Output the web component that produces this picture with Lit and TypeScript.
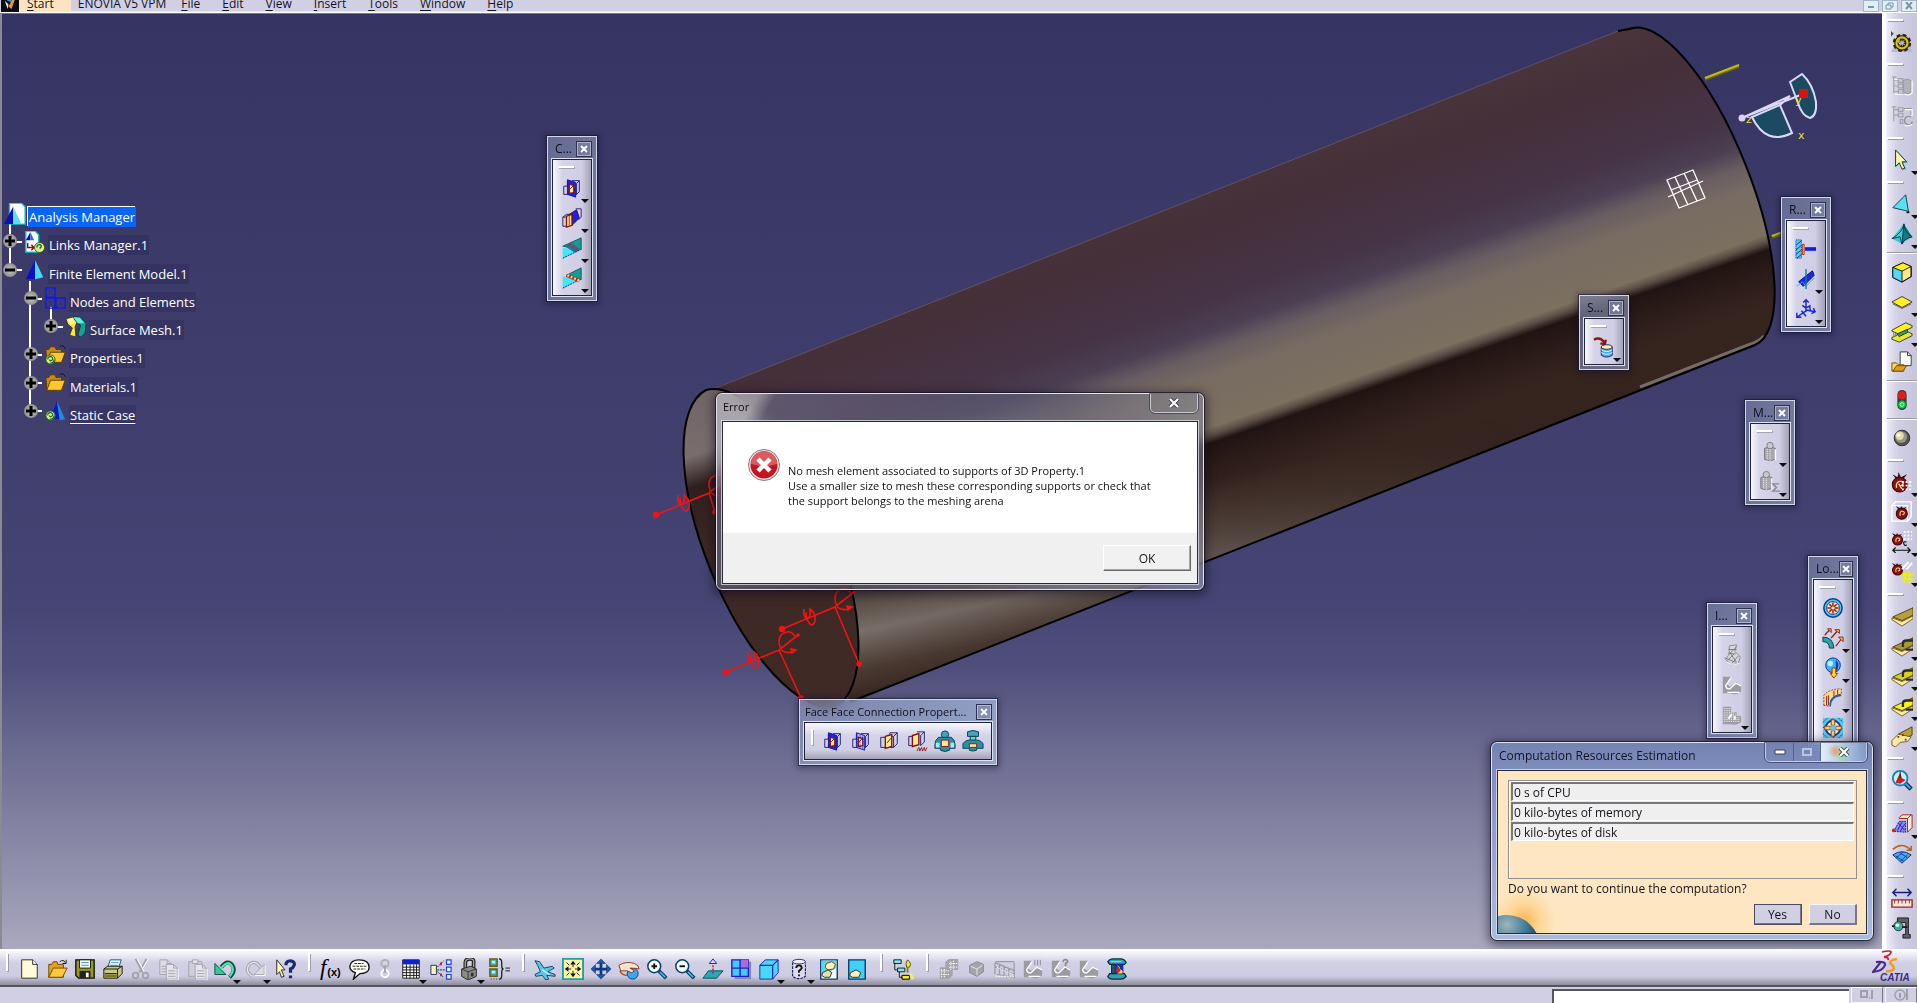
import { LitElement, html, svg, css, nothing } from "lit";
import { customElement, property } from "lit/decorators.js";

type Item = { icon: string; label: string; drop?: boolean; narrow?: boolean };
const it = (icon: string, label: string, drop = false, narrow = false): Item => ({ icon, label, drop, narrow });

const faceFrame = (fill: string) => svg`
  <path d="M3 10h4V5h4M3 10v9h7M7 19l3-4" fill="none" stroke="#1a1a70"/>
  <path d="M12 4h8v12l-3 3h-4M20 4l-3 3v12" fill="none" stroke="#1a1a70"/>
  <path d="M7 3l9 3v16l-9-3z" fill="${fill}" stroke="#1010c0"/>
  <path d="M9 8l5 1v8l-5 1z" fill="#ffe98a" stroke="#8a1010" stroke-width="1.5"/>
  <path d="M10 13l4-4" stroke="#222"/>`;
const gearBody = svg`<circle cx="12" cy="13" r="6" fill="none" stroke="#2a2200" stroke-width="8" stroke-dasharray="2.700 2"/>
  <circle cx="12" cy="13" r="6" fill="none" stroke="#2a2200" stroke-width="5"/>
  <circle cx="12" cy="13" r="6" fill="none" stroke="#d8c018" stroke-width="2.500"/>
  <path d="M9 9q-2 3 1 6" fill="none" stroke="#fff36a"/>`;
const tomato = svg`<path d="M3 3l5 3 1-5 2 5 6-3-4 5H7z" fill="#2a1414"/>
  <circle cx="10" cy="13" r="7" fill="#8c1010" stroke="#3a0606"/>
  <path d="M7 16q-1-7 5-6q3 2-1 4M9 12l3 5" fill="none" stroke="#ffd9a0" stroke-width="1.3"/>`;
const tomatoSmall = svg`<path d="M1 2l4 2 1-2 1 2 4-1-3 3H4z" fill="#2a1414"/>
  <circle cx="6.500" cy="9" r="5" fill="#8c1010" stroke="#3a0606"/>
  <path d="M5 11q-1-5 3-4q2 2-1 3" fill="none" stroke="#ffd9a0"/>`;
const greyBlob = svg`<path d="M2 3h9l-5 8 4 3 6-5 6 3v7q-6 5-12 2H2z" fill="#9c9ba2"/>
  <path d="M11 4l-6 9q1 4 5 3l6-6 6 3M7 20h13" fill="none" stroke="#fff" stroke-width="1.500"/>`;
const recycle = svg`<circle cx="6" cy="17" r="5" fill="#d8f08a" stroke="#16602a"/>
  <path d="M3 17q0-4 4-3q3 2 0 4q-2 1-2-1M10 17q0 4-5 4" fill="none" stroke="#16602a" stroke-width="1.3"/>`;
const folder = svg`<path d="M1 6h3l2-3h5l1 3h6v14H2z" fill="#c88a10" stroke="#5a3c00"/>
  <path d="M2 20L6 9h16l-4 11z" fill="#ffc72c" stroke="#5a3c00"/><path d="M16 3q4-3 6 2" fill="none" stroke="#111"/>`;
const layer = (top: string) => svg`<path d="M2 13L24 3v8L12 17z" fill="${top}" stroke="#4a3c08"/>
  <path d="M1 14l11 4 12-6v3l-12 8-11-7z" fill="#ffe9a0" stroke="#4a3c08" stroke-width=".8"/>`;
const clampArm = svg`<path d="M13 13V9q0-3 4-3h7M16 16h8" fill="none" stroke="#2e2e24" stroke-width="2.500"/>`;
const lens = svg`<path d="M14 14l8 8" stroke="#0a3a66" stroke-width="4"/><path d="M15 15l6 6" stroke="#58c8f0" stroke-width="1.500"/>
  <circle cx="9" cy="9" r="7" fill="#f2fdff" stroke="#0a3a66" stroke-width="1.600"/>`;
const barrel = svg`<path d="M6 8q6-3 12 0v12q-6 3-12 0z" fill="#a9a8ae" stroke="#77767c"/>
  <circle cx="12" cy="5" r="3.500" fill="#c9c8ce" stroke="#77767c"/><path d="M9 9v12M12 9v13" stroke="#fff" stroke-dasharray="1 1"/>
  <path d="M18 9v12" stroke="#fff" stroke-width="1.500"/>`;
const page = (x: number, y: number, c: string, s: string) =>
  svg`<path d="M${x} ${y}h8l4 4v12h-12z" fill="${c}" stroke="${s}"/><path d="M${x + 8} ${y}v4h4M${x + 2} ${y + 7}h8M${x + 2} ${y + 10}h8M${x + 2} ${y + 13}h8" fill="none" stroke="${s}"/>`;

const ICONS: Record<string, unknown> = {
  faceBlue: faceFrame("#2020e0"),
  faceMesh: svg`${faceFrame("#b8b8f0")}<path d="M8 4v15M11 5v15M14 6v15" stroke="#1010c0" stroke-dasharray="1 1"/>`,
  facePlain: svg`<path d="M3 8h5l3-3M3 8v11h6" fill="none" stroke="#1a1a70"/><path d="M13 3h8v12l-4 4h-4zM21 3l-4 4v12M13 7h4" fill="none" stroke="#1a1a70"/><path d="M8 7l7-2v13l-7 2z" fill="#ffe98a" stroke="#8a1010" stroke-width="1.500"/><path d="M10 14l4-5" stroke="#222"/>`,
  faceSpring: svg`<path d="M3 7h5l3-3M3 7v10h6" fill="none" stroke="#1a1a70"/><path d="M12 2h8v11l-4 4M20 2l-4 4v11" fill="none" stroke="#1a1a70"/><path d="M7 6l7-2v12l-7 2z" fill="#ffe98a" stroke="#8a1010" stroke-width="1.500"/><path d="M12 23l2-4 1 4 2-4 1 4 2-4 1 4 2-4" fill="none" stroke="#a01010"/>`,
  boltUp: svg`<circle cx="12" cy="5" r="4" fill="#3aa8b8" stroke="#0a3a50"/><path d="M5 8q-4 3-4 8v4h6v2q5 3 10 0v-2h6v-4q0-5-4-8z" fill="#2a90a8" stroke="#0a3a50"/><path d="M2 14h4v5H2zM18 14h4v5h-4z" fill="#a8e8f0"/><path d="M8 11h8v7H8z" fill="#ffe98a" stroke="#8a1010"/>`,
  boltDown: svg`<path d="M6 2q6-3 12 0v5H6z" fill="#3aa8b8" stroke="#0a3a50"/><path d="M9 7h6v5H9z" fill="#70d0d8" stroke="#0a3a50"/><path d="M1 15q3-5 11-4 8-1 11 4v5h-7v2q-4 2-8 0v-2H1z" fill="#2a90a8" stroke="#0a3a50"/><path d="M8 15h8v4H8z" fill="#ffe98a" stroke="#8a1010"/>`,
  weld: svg`<path d="M2 11h4v10H2zM2 11l4-3h5" fill="none" stroke="#1a1a70"/><path d="M16 2h6v9l-3 3" fill="#f0c8e8" stroke="#1a1a70"/><path d="M9 8l8-5 3 9-8 8z" fill="#2020e0" stroke="#101090"/><path d="M6 10l6-2v12l-6 2z" fill="#ffe98a" stroke="#8a1010" stroke-width="1.500"/><path d="M9 10v11" stroke="#c02020"/>`,
  seamA: svg`<path d="M2 10L22 1v13z" fill="#189a90" stroke="#0a5a5a"/><path d="M2 12l19 2L2 24z" fill="#40e8f8"/><path d="M4 10l8-4 9 8-6 3z" fill="#207890"/><path d="M9 8l9 6" stroke="#c02050" stroke-width="3" stroke-dasharray="2 2"/><path d="M2 23l19-9" stroke="#1a1a80" stroke-dasharray="2 1"/>`,
  seamB: svg`<path d="M6 9L22 1v13z" fill="#189a90" stroke="#0a5a5a"/><path d="M2 10l15 5-15 9z" fill="#40e8f8"/><path d="M2 23l18-9" stroke="#1a1a80" stroke-dasharray="2 1"/><path d="M6 9l14 6" stroke="#b02030" stroke-width="3.500"/><path d="M7 9l13 6" stroke="#ffe96a" stroke-width="2.500" stroke-dasharray="2 2"/>`,
  clampWall: svg`<path d="M1 2h6v20H1z" fill="#58c8f0" stroke="#102a90" stroke-dasharray="1 1"/><path d="M1 8l6-5M1 13l6-5M1 18l6-5M2 22l5-4" stroke="#10306a"/><path d="M8 7h2v11H8z" fill="#ffd040" stroke="#b02010"/><path d="M11 12h12" stroke="#1020e0" stroke-width="4"/>`,
  slider: svg`<path d="M4 15L19 3l2 5-12 12z" fill="#1828e8" stroke="#0a0a90"/><path d="M2 20l6-5 4 5 9-9" fill="none" stroke="#38a8d8"/><path d="M12 1v22" stroke="#1a7a9a" stroke-width="1.500"/>`,
  triad: svg`<path d="M12 15V2M9 5l3-3 3 3M12 13l10 2M20 11l2 4-4 2M12 14L2 21M2 16v5h5M8 8l4 3 5-3M16 9l1 6M7 14l5 6" fill="none" stroke="#1828d8" stroke-width="1.600"/>`,
  dbArrow: svg`<path d="M1 4q7-4 12 4M8 8l5 1 1-5" fill="none" stroke="#8a1818" stroke-width="2.500"/><path d="M9 12q6-3 12 0v9q-6 4-12 0z" fill="#4aa8f0" stroke="#102a70"/><ellipse cx="15" cy="12" rx="6" ry="2.500" fill="#fff0a0" stroke="#102a70"/><path d="M9 15q6 4 12 0M9 18q6 4 12 0" fill="none" stroke="#e8f8ff"/>`,
  barrel,
  barrelSum: svg`<g transform="translate(-4 -1)">${barrel}</g><path d="M22 14h-7l4 4-4 4h8" fill="none" stroke="#88878e" stroke-width="1.500"/>`,
  greyRings: svg`<path d="M9 2l8-1-2 7 6 6-2 7-7 2-7-6 4-6z" fill="#d8d7de" stroke="#8a898f"/><path d="M8 6l9 0M9 11l8-8M8 10l8 1M4 15l12 5M10 10l7 10M12 21l7-8M7 18l7-7" fill="none" stroke="#77767c"/><path d="M7 20l6 3 7-2" fill="none" stroke="#fff"/>`,
  greyBlob,
  greyBlobHatch: svg`<path d="M2 3h9v6h6v4h5v7q-6 4-10 2H2z" fill="#9c9ba2"/><path d="M3 5h7M3 7h7M3 9h12M3 11h14M3 13h14M3 15h18M3 17h18M3 19h18" stroke="#fff" stroke-dasharray="1 1"/><path d="M8 16l4-5M15 17v-4" stroke="#fff" stroke-width="2"/>`,
  greyBlobWave: svg`${greyBlob}<path d="M14 2v6M17 2v6M20 2v6" stroke="#88878e"/>`,
  greyBlobAsk: svg`${greyBlob}<path d="M14 4q1-3 4-2 3 2-1 4v3M17 11v2" fill="none" stroke="#88878e" stroke-width="1.800"/>`,
  pressure: svg`<circle cx="12" cy="12" r="10" fill="#48c8f0" stroke="#0a3a90" stroke-width="1.600"/><circle cx="12" cy="12" r="7" fill="#ffe8b0" stroke="#0a3a90"/><path d="M12 6v4M12 14v4M6 12h4M14 12h4M8 8l3 3M13 13l3 3M16 8l-3 3M11 13l-3 3" stroke="#a01010" stroke-width="1.600"/>`,
  force: svg`<path d="M1 11q11 0 12 12H8Q8 16 1 16z" fill="#28a8a0" stroke="#0a3a50"/><path d="M3 9l6-7M10 12l8-9M15 21l7-9" stroke="#8a1818" stroke-width="1.300"/><path d="M6 2h4v4zM14 3h5v4zM18 11h5v5z" fill="#ffd040" stroke="#8a1818"/>`,
  gravity: svg`<circle cx="12" cy="9" r="8" fill="#38b8f0" stroke="#0a2a90"/><circle cx="9" cy="7" r="3" fill="#b8f0ff"/><path d="M15 3q6 6 0 13z" fill="#1838c0"/><path d="M11 12h4v6h2l-4 5-4-5h2z" fill="#ffe020" stroke="#b02010"/>`,
  dispForce: svg`<path d="M2 20V9q6-7 19-7v6Q8 10 9 21z" fill="#ffd890" stroke="#b02010" stroke-dasharray="2 1.500"/><path d="M5 20V10M9 18q0-8 11-10M7 20V9M13 4v6M17 3v5" fill="none" stroke="#8a1818"/><path d="M9 21q-1-10 12-12" fill="none" stroke="#0a70a0" stroke-width="1.500"/>`,
  bearing: svg`<path d="M1 1h22v22H1z" fill="#58c8f0"/><path d="M1 6l5-5M1 12L12 1M12 23l11-11M18 23l5-5M1 18l5 5M18 1l5 5" stroke="#0a3a90" stroke-dasharray="2 1"/><circle cx="12" cy="12" r="8" fill="#f4f0ff" stroke="#0a3a90" stroke-width="2"/><path d="M10 3h4v6h-4zM10 15h4v6h-4zM3 10h6v4H3zM15 10h6v4h-6z" fill="#ffd860" stroke="#8a3010"/><circle cx="12" cy="12" r="3" fill="#58c8f0"/>`,

  gear: svg`<path d="M12 1l12 22H0z" fill="#bcb9cf"/>${gearBody}<path d="M0 0l3 3-3 3z" fill="#4a5a10"/>`,
  dbTree: svg`<path d="M3 2v18M3 6h6M3 12h6M3 18h6M1 2h5M8 4h5v4H8zM8 10h5v4H8zM8 16h5v4H8z" fill="none" stroke="#a3a2aa" stroke-width="1.300"/><path d="M13 6q5-3 9 0v13q-4 3-8 0z" fill="#b2b1b9" stroke="#96959c"/><path d="M23 6v14q-4 3-8 1M4 5h3M4 21h9" fill="none" stroke="#fff" stroke-width="1.300"/>`,
  dbTree2: svg`<path d="M3 2v16M3 5h6M3 11h6M1 2h5M8 3h5v4H8zM8 9h5v4H8zM10 16h3v4h-3z" fill="none" stroke="#a3a2aa" stroke-width="1.300"/><path d="M14 4h8v7M22 13q-6-2-7 3t5 6q3-1 3-4" fill="none" stroke="#96959c" stroke-width="1.600"/><path d="M15 5h8v7M15 22q4 2 8-1" fill="none" stroke="#fff" stroke-width="1.300"/>`,
  cursor: svg`<path d="M5 2l13 13h-6l4 7-4 1-3-7-4 4z" fill="#28d8e8" transform="translate(1 0)"/><path d="M5 1l12 13h-5l3 7-3 1-3-7-4 4z" fill="#fff8b0" stroke="#222"/>`,
  tri: svg`<path d="M2 16L16 2l3 18z" fill="#58e0f0" stroke="#0a3a50"/><path d="M17 20h3v2h-3z" fill="#111"/>`,
  tetra: svg`<path d="M1 17L14 1l9 14-11 8z" fill="#38c8d0"/><path d="M14 1l9 14-10 1z" fill="#107a80"/><path d="M14 1q-1 9-13 16l9-2 2 8q2-6 11-8Q14 11 14 1z" fill="#48d0d8" stroke="#0a3a50"/><path d="M14 1q1 10 9 14-9 2-11 8z" fill="#147a80" stroke="#0a3a50"/>`,
  cube: svg`<path d="M2 7l11-5 9 4v11l-10 6-10-5z" fill="#ffe98a" stroke="#111"/><path d="M2 7l11-5 9 4-10 5z" fill="#fff020"/><path d="M2 7l10 4v12L2 18z" fill="#58d8f8"/><path d="M2 7l10 4 10-5M12 11v12M2 7l11-5 9 4v11l-10 6-10-5z" fill="none" stroke="#111"/>`,
  plate: svg`<path d="M1 12l11-6 11 6-11 6z" fill="#fff020" stroke="#333"/><path d="M2 14l10 5 10-5" fill="none" stroke="#555"/>`,
  beam: svg`<path d="M1 10L16 2l7 3v2L8 14l-7-3z" fill="#fff020" stroke="#333"/><path d="M7 14l11-5v6L7 20z" fill="#30a050" stroke="#333"/><path d="M1 18l6-3 2 2 10-5 4 2v2L9 23l-8-3z" fill="#e8e830" stroke="#333"/><path d="M3 12v5M5 13v4" stroke="#18a0a0"/>`,
  docFolder: svg`<path d="M10 1h8l4 4v11H10z" fill="#fff" stroke="#333"/><path d="M18 1v4h4" fill="none" stroke="#333"/><path d="M1 13h5l2 2h6v7H1z" fill="#ffd860" stroke="#6a4a00"/><path d="M2 22l4-6h11l-4 6z" fill="#e09a20" stroke="#6a4a00"/>`,
  light: svg`<rect x="7" y="1" width="10" height="22" rx="5" fill="#3a3a3a"/><circle cx="12" cy="7" r="4.500" fill="#e81818"/><circle cx="12" cy="17" r="4.500" fill="#18c850" stroke="#0a7a20"/><circle cx="12" cy="17" r="2" fill="none" stroke="#b8ffb8"/>`,
  sphere: svg`<circle cx="12" cy="12" r="8.500" fill="#55544c" stroke="#2e2e2e"/><circle cx="11" cy="11" r="6.500" fill="#96958a"/><circle cx="9.500" cy="9.500" r="4.500" fill="#e0dca8"/><circle cx="8.500" cy="9" r="2" fill="#fffbe0"/>`,
  tomDots: svg`<g transform="translate(-2 0) scale(1.150)">${tomato}</g><path d="M12 12h12M12 16h12M12 20h12" stroke="#fff" stroke-width="2" stroke-dasharray="2 2"/>`,
  tomBox: svg`<path d="M1 5h17v17H1z" fill="none" stroke="#fff" stroke-width="1.500"/><path d="M1 5l4-4h17v16l-4 5" fill="none" stroke="#fff" stroke-width="1.500"/><g transform="translate(4 3) scale(1.200)">${tomatoSmall}</g>`,
  tomSize: svg`<g transform="scale(1.100)">${tomatoSmall}</g><path d="M14 1h9M14 5h9M14 9h9" stroke="#fff" stroke-width="2" stroke-dasharray="2 2"/><path d="M2 21h19M5 18l-3 3 3 3M18 18l3 3-3 3M17 12q-4-1-3 2t3 1" fill="none" stroke="#111" stroke-width="1.300"/>`,
  tomHash: svg`<g transform="scale(1.100)">${tomatoSmall}</g><path d="M12 9l7-8M17 9l6-7" stroke="#fff" stroke-width="2"/><path d="M15 12v12M20 12v12M12 15h12M12 20h12" stroke="#f0f000" stroke-width="2.200"/>`,
  layers: svg`${layer("#b8a038")}`,
  layers1: svg`${layer("#a89838")}${clampArm}`,
  layers2: svg`${layer("#d8d020")}${clampArm}`,
  layers3: svg`${layer("#f8f020")}${clampArm}`,
  layers4: svg`<path d="M8 10L23 2v9l-9 4z" fill="#b8a038" stroke="#4a3c08"/><path d="M1 17l7-7 14 3-4 5-8 1-5 5-4-2z" fill="#ffe9a0" stroke="#4a3c08" stroke-width=".8"/><path d="M7 13h2M12 11h2M15 16h2" stroke="#b02010" stroke-width="2"/>`,
  inspect: svg`<path d="M14 14l8 8" stroke="#0a3a66" stroke-width="5"/><path d="M15 15l6 6" stroke="#38a8e8" stroke-width="2"/><circle cx="10" cy="10" r="8" fill="#b8f8ff" stroke="#1880b0" stroke-width="2"/><path d="M10 4l2 6 4 2-6 4-5-1 2-5z" fill="#d81818"/><path d="M10 10V3" stroke="#2a1010"/>`,
  probe: svg`<path d="M9 5l3-3h11v14l-5 5V6H9z" fill="#ffe8d0" stroke="#a01818"/><path d="M18 6l4-4" stroke="#a01818"/><path d="M3 20L9 9h7v12z" fill="#8886f0" stroke="#101090" stroke-dasharray="2 1"/><path d="M8 11l7 8M12 10l-5 9M15 12l-5 8" stroke="#2020c0"/><circle cx="3" cy="19" r="2" fill="#d02020"/>`,
  fan: svg`<path d="M2 7q10-9 20 1M22 3v5h-5" fill="none" stroke="#c06010" stroke-width="1.600"/><path d="M2 13q10-7 20 0L12 22z" fill="#48a8f0" stroke="#102a70"/><path d="M5 14l9 6M10 11l8 5M18 13l-8 7M13 10l-7 6" stroke="#1040a0"/>`,
  measure: svg`<path d="M2 6h20M6 2L2 6l4 4M18 2l4 4-4 4" fill="none" stroke="#1a1a80" stroke-width="1.500"/><path d="M1 14h22v8H1z" fill="#ffe8e0" stroke="#a02020" stroke-width="1.500"/><path d="M4 14v4M8 14v4M12 14v4M16 14v4M20 14v4" stroke="#a02020"/>`,
  clamp: svg`<path d="M7 1h12v18h2v4h-8v-4h3V6H7z" fill="#5a6068" stroke="#1a1a1a"/><circle cx="8" cy="10" r="5" fill="#48a8a0" stroke="#1a3a3a"/><circle cx="7" cy="9" r="2" fill="#d8fff0"/><path d="M1 10h3M12 11h6" stroke="#1a1a1a" stroke-width="2"/>`,

  newDoc: svg`<path d="M4 2h12l5 5v15H4z" fill="#fffbd8" stroke="#222"/><path d="M16 2v5h5" fill="#fff" stroke="#222"/>`,
  open: svg`<path d="M3 7h3l2-3h4l1 3h6v14H3z" fill="#e0a020" stroke="#6a4a00"/><path d="M3 21L8 11h15l-5 10z" fill="#ffc838" stroke="#6a4a00"/><path d="M15 4q4-3 6 1M22 2v4h-4" fill="none" stroke="#111"/>`,
  save: svg`<path d="M2 2h20v20H5l-3-3z" fill="#9a9a18" stroke="#111" stroke-width="1.500"/><path d="M6 2h12v9H6z" fill="#f4fbff" stroke="#111"/><path d="M8 5h8M8 8h8" stroke="#3a8ad0"/><path d="M6 14h12v8H6z" fill="#222"/><path d="M13 16h3v5h-3z" fill="#fff"/>`,
  print: svg`<path d="M9 2h12l-3 9H6z" fill="#e8f8ff" stroke="#1a4a7a"/><path d="M10 5h8M9 8h8" stroke="#3a9ad0"/><path d="M2 12l4-3h16v8l-5 5H2z" fill="#c8c880" stroke="#111"/><path d="M2 12h15v10M17 12l5-3M3 17h13" fill="none" stroke="#111"/><path d="M3 18h13v3H3z" fill="#7a7a18"/>`,
  cut: svg`<path d="M6 1l8 15M18 1l-8 15" stroke="#a3a2aa" stroke-width="2"/><path d="M8 1l8 15M20 1l-6 10" stroke="#fff"/><circle cx="6" cy="19" r="3" fill="none" stroke="#a3a2aa" stroke-width="2"/><circle cx="17" cy="19" r="3" fill="none" stroke="#a3a2aa" stroke-width="2"/>`,
  copy: svg`${page(2, 2, "#dcdbe8", "#a3a2aa")}${page(9, 7, "#e4e3ee", "#a3a2aa")}<path d="M22 12v12H10" fill="none" stroke="#fff"/>`,
  paste: svg`<path d="M3 4h14v16H3z" fill="#cfcedb" stroke="#a3a2aa"/><path d="M7 2h6v4H7z" fill="#e4e3ee" stroke="#a3a2aa"/>${page(10, 7, "#e4e3ee", "#a3a2aa")}<path d="M23 12v12H11" fill="none" stroke="#fff"/>`,
  undo: svg`<path d="M8 10q7-9 12-2 4 6-3 13" fill="none" stroke="#0a4a3a" stroke-width="4.500"/><path d="M1 6v12h12z" fill="#38c898" stroke="#0a4a3a"/><path d="M7 12q8-10 12-4 4 6-2 12" fill="none" stroke="#58e0b0" stroke-width="2.500"/>`,
  redo: svg`<path d="M19 12Q12 0 5 8q-4 7 4 12" fill="none" stroke="#a3a2aa" stroke-width="3.500"/><path d="M19 12Q12 0 5 8q-4 7 4 12" fill="none" stroke="#e4e3ee" stroke-width="1.500"/><path d="M22 7v11H11z" fill="#dcdbe8" stroke="#a3a2aa"/><path d="M23 8v11H12" fill="none" stroke="#fff"/>`,
  whatsThis: svg`<path d="M3 2l9 11H8l3 7-3 1-2-6-3 3z" fill="#fff8b0" stroke="#222"/><path d="M13 8q0-5 5-5 5 1 4 5-1 3-4 4v4M18 19v3" fill="none" stroke="#1a2a70" stroke-width="3.500"/>`,
  fx: svg`<text x="0" y="19" font-family="Liberation Serif, serif" font-style="italic" font-size="25">f</text><text x="8" y="20" font-family="Liberation Sans, sans-serif" font-weight="bold" font-size="12">(x)</text>`,
  talk: svg`<path d="M12 2C19 2 23 5 23 10S18 17 13 17L6 23l2-7Q2 14 2 9 3 2 12 2z" fill="#fffff4" stroke="#111" stroke-width="1.500"/><path d="M7 6h10M5 9h15M6 12h13" stroke="#111" stroke-dasharray="3 1"/>`,
  key: svg`<circle cx="12" cy="6" r="4" fill="none" stroke="#b0afb8" stroke-width="2"/><circle cx="12" cy="17" r="4" fill="none" stroke="#fff" stroke-width="2"/><path d="M12 8v8" stroke="#a3a2aa" stroke-width="2"/>`,
  table: svg`<path d="M3 2h18v20H3z" fill="#fff" stroke="#111"/><path d="M3 2h18v5H3z" fill="#1020d0"/><path d="M3 10h18M3 13h18M3 16h18M3 19h18M7 7v15M11 7v15M15 7v15M18 7v15" stroke="#111"/>`,
  links: svg`<path d="M1 8h6v10H1z" fill="#fff8b0" stroke="#1a2a70"/><path d="M8 10l7-7M8 13h8M8 15l7 6" stroke="#111" stroke-dasharray="2 1"/><path d="M18 2h5v5h-5zM18 10h5v5h-5zM18 18h5v5h-5z" fill="#e8f8ff" stroke="#2040e0" stroke-width="1.300"/><path d="M12 5v3M12 17v3" stroke="#c02020" stroke-width="2"/>`,
  lock: svg`<path d="M8 11V5q0-4 5-4t4 4v6" fill="none" stroke="#222" stroke-width="4"/><path d="M8 11V5q0-4 5-4t4 4v6" fill="none" stroke="#a0a09c" stroke-width="1.500"/><path d="M4 12l10-3 6 3v8l-9 4-7-4z" fill="#8a8a88" stroke="#222"/><path d="M4 12l7 3 9-3M11 15v9" fill="none" stroke="#333"/><path d="M14 16h3v4h-3z" fill="#333"/>`,
  books: svg`<path d="M2 1h8v8H2zM2 12h8v8H2z" fill="#38a8a0" stroke="#6a5a10" stroke-width="1.500"/><path d="M4 3h4v3H4zM4 14h4v3H4z" fill="#b8f0f0"/><path d="M3 23h7" stroke="#111" stroke-dasharray="1 2"/><path d="M12 1q3 0 3 4v4q0 3 2 3-2 0-2 3v4q0 4-3 4" fill="none" stroke="#111" stroke-width="1.300"/><path d="M19 11h5M19 14h5" stroke="#111"/>`,
  fly: svg`<path d="M1 3l5 1 5 7 9-2 2 2-7 4 8 3v2l-9-1 2 4-3 1-4-5-7 1-1-2 6-3-3-7z" fill="#58c8e8" stroke="#0a3a66"/><path d="M9 13l8 5" stroke="#c8f4ff" stroke-width="1.500"/>`,
  fit: svg`<path d="M1 1h22v22H1z" fill="#fdf6a0" stroke="#18a0a8" stroke-width="2"/><path d="M12 5v5M12 14v5M5 12h5M14 12h5M5 5l3 3M19 5l-3 3M5 19l3-3M19 19l-3-3" stroke="#111"/><path d="M9 7l3-4 3 4zM9 17l3 4 3-4zM7 9l-4 3 4 3zM17 9l4 3-4 3z" fill="#111"/>`,
  pan: svg`<path d="M12 3v18M3 12h18" stroke="#0a3a80" stroke-width="3"/><path d="M7 6l5-5 5 5zM7 18l5 5 5-5zM6 7l-5 5 5 5zM18 7l5 5-5 5z" fill="#1a58a0" stroke="#0a2a60" stroke-width=".5"/>`,
  rotate: svg`<circle cx="16" cy="17" r="6" fill="#38a8f0" stroke="#0a3a80"/><path d="M1 8q8-5 17-2 5 2 5 6-4-1-10-1l5 3-3 2-5-2H3z" fill="#ffe0cc" stroke="#7a3a20"/><path d="M2 14q2 5 8 5" fill="none" stroke="#c04020" stroke-width="1.500"/>`,
  zoomIn: svg`${lens}<path d="M6 9h6M9 6v6" stroke="#111" stroke-width="2"/>`,
  zoomOut: svg`${lens}<path d="M6 9h6" stroke="#111" stroke-width="2"/>`,
  normal: svg`<path d="M7 14h16l-7 8H1z" fill="#28a8b0" stroke="#0a4a5a"/><path d="M12 17V6" stroke="#b02020" stroke-width="1.500" stroke-dasharray="2 1.500"/><path d="M8 6l4-5 4 5z" fill="#d8d8ff" stroke="#2020a0"/>`,
  quad: svg`<path d="M5 4h18v19H5z" fill="#8a88a8"/><path d="M2 2h18v18H2z" fill="#48c8f8" stroke="#1a20c0" stroke-width="1.500"/><path d="M12 2h8v9h-8z" fill="#b068d8"/><path d="M11 2v18M2 11h18" stroke="#1a20c0" stroke-width="1.500"/>`,
  cubeView: svg`<path d="M2 8l6-6h14v14l-6 7H2z" fill="#48d8f8" stroke="#1a20c0"/><path d="M2 8h14v15M16 8l6-6" fill="none" stroke="#1a20c0" stroke-width="1.300"/>`,
  cylAsk: svg`<path d="M5 5v15q7 5 14 0V5" fill="#dcdbee" stroke="#1a2a60" stroke-width="1.300" stroke-dasharray="3 1"/><ellipse cx="12" cy="4" rx="7" ry="2.500" fill="#eeeef8" stroke="#1a2a60"/><path d="M9 11q0-3 3-3t3 3q-1 2-3 3v2M12 18v2" fill="none" stroke="#111" stroke-width="2"/>`,
  hide: svg`<path d="M3 2h18v21H3z" fill="#f4f8f8" stroke="#0a3a66" stroke-width="1.500"/><path d="M4 3h16v8L4 20z" fill="#58d8f4"/><path d="M9 6l6-2 4 3-2 5-6 1-3-3z" fill="#fff0b0" stroke="#5a4a10"/><path d="M5 16l6-3 4 3-2 5H7l-3-2z" fill="#e8e0a8" stroke="#2a2a2a"/>`,
  swap: svg`<path d="M3 2h18v21H3z" fill="#40d0f8" stroke="#0a3a66" stroke-width="1.500"/><path d="M5 16l6-3 5 3-2 5H7l-3-2z" fill="#fff0c0" stroke="#2a2a2a"/>`,
  treeCandle: svg`<path d="M2 2h8v4H2zM6 11h8v4H6zM11 19h8v4h-8z" fill="#80e8f0" stroke="#111"/><path d="M11 19h8v4h-8z" fill="#f8f020" stroke="#111"/><path d="M3 6v7h3M8 15v6h3" fill="none" stroke="#111"/><path d="M17 2q5 4 2 8h-3q-2-4 1-8z" fill="#f8e820" stroke="#4a4a10"/><path d="M17 10v6" stroke="#8a7a10" stroke-width="2"/><path d="M20 17l3 6" stroke="#f0f060" stroke-width="3"/>`,
  greyHatch: svg`<path d="M2 10h6V4l4-3h10v12h-6v6l-4 4H2z" fill="#a5a4aa"/><path d="M4 12v9M7 12v9M14 4v9M17 3v9M3 14h9M3 18h9M12 6h9M12 10h9" stroke="#fff" stroke-dasharray="1.500 1"/>`,
  greyCube: svg`<path d="M4 8l8-4 7 3v8l-7 5-8-4z" fill="#a5a4aa" stroke="#88878e"/><path d="M5 9l7 3v7M12 12l6-4" fill="none" stroke="#e8e8ec"/>`,
  greyBridge: svg`<path d="M1 5l22 9M1 9l22 9M1 5v13M6 7v12M11 9v10M16 11v9M22 5v17M3 18l20 3M2 4h20" fill="none" stroke="#9c9ba2" stroke-width="1.300"/><path d="M2 20h20M3 10l18 8" stroke="#fff" stroke-dasharray="2 1"/>`,
  press: svg`<path d="M2 4q2-3 6-3h8q4 0 6 4l-2 2H4zM4 17h16l2 3q-2 3-6 3H7q-4 0-5-3z" fill="#38a0b0" stroke="#0a2a3a" stroke-width="1.300"/><path d="M6 7h4v10H6z" fill="#1a5a70" stroke="#0a2a3a"/><path d="M10 7h9v10h-9z" fill="#1828c0"/><path d="M12 7q7 5 0 10h6v-3l-3-2z" fill="#f8e828"/><path d="M12 9l4 4-2 3-3-1z" fill="#e02020"/><path d="M5 4h12" stroke="#98e8f0"/>`,

  tAnalysis: svg`<path d="M6 0h13l4 4v19H6z" fill="#fff" stroke="#18c0d0" stroke-width="1.500"/><path d="M0 23L10 4v19z" fill="#0a10b8"/><path d="M10 4l9 19h-9z" fill="#58e0f8"/>`,
  tLinks: svg`<path d="M2 0h10l4 4v19H2z" fill="#fff" stroke="#18c0d0" stroke-width="1.500"/><path d="M2 10l5-9v9z" fill="#0a10b8"/><path d="M7 1l4 9H7z" fill="#3060f0"/><path d="M4 13v5h6M8 15l3 3-3 3" fill="none" stroke="#8a1010" stroke-width="1.600"/><circle cx="17" cy="18" r="5.500" fill="#d8f08a" stroke="#4a4a10"/><path d="M14 18q0-4 4-3q2 2-1 4" fill="none" stroke="#16602a" stroke-width="1.500"/>`,
  tModel: svg`<path d="M2 22L12 1v21z" fill="#0a10c8"/><path d="M12 1l9 19-9 2z" fill="#48d8f8"/>`,
  tNodes: svg`<path d="M1 1h10v10H1zM1 12h10v11H1zM12 12h10v11H12z" fill="none" stroke="#1418e0" stroke-width="1.500"/><path d="M1 1l10 10M11 1L1 11M1 12l10 11M11 12L1 23M12 12l10 11M22 12L12 23" fill="none" stroke="#1418e0" stroke-dasharray="2 2"/>`,
  tMesh: svg`<path d="M1 3l8-2 4 6-2 5 1 11-7-2 3-8-5-4z" fill="#ffe828" stroke="#333"/><path d="M9 1l8 0 6 7-1 11-5 4-3-2 3-11-4-3z" fill="#18a090" stroke="#0a3a3a"/><path d="M9 1l7 1 5 6-7 0z" fill="#60f0e8"/><path d="M2 4l6-2 3 6-5 1z" fill="#fff8a8"/>`,
  tProps: svg`${folder}${recycle}`,
  tFolder: folder,
  tStatic: svg`<path d="M6 20L13 1l3 20z" fill="#0a18c8"/><path d="M13 1l9 20-6 1z" fill="#2888d8"/>${recycle}`,
  app: svg`<path d="M0 0h24v24H0z" fill="#0a0a14"/><path d="M3 2l9 1 2 8-7-3z" fill="#28a8e0"/><path d="M12 2l7 4-5 14-4-3 4-8z" fill="#f09030"/><path d="M5 9l5 5-1 6z" fill="#f8f0d0"/>`,
};

const draw = (name: string) => html`<svg class="glyph" viewBox="0 0 24 24" width="22" height="22" aria-hidden="true">${ICONS[name]}</svg>`;

const toolCss = css`
  button { font: inherit; color: inherit; background: none; border: 0; padding: 0; margin: 0; }
  .tool { position: relative; flex: none; width: 28px; height: 30px; display: flex; align-items: center; justify-content: center; }
  .glyph { display: block; flex: none; }
  .tool.drop::after { content: ""; position: absolute; right: 0; bottom: 0; border: 4px solid transparent; border-top: 4px solid #0c0c14; border-bottom: 0; }
`;

@customElement("tool-palette")
export class ToolPalette extends LitElement {
  @property() heading = "";
  @property({ type: Boolean, reflect: true }) wide = false;
  @property({ attribute: false }) items: Item[] = [];
  static styles = [toolCss, css`
    :host { display: block; box-sizing: border-box; width: 50px; border: 1px solid #d3d8e8; outline: 1px solid rgba(20, 20, 50, .55);
      background: linear-gradient(100deg, rgba(120, 130, 165, .7), rgba(165, 175, 205, .55)); backdrop-filter: blur(5px);
      box-shadow: 0 1px 6px 2px rgba(15, 15, 40, .45); font: 12px/16px "Open Sans", "Noto Sans", sans-serif; color: #10101c; padding: 2px 4px 4px; }
    :host([wide]) { width: 198px; background: linear-gradient(90deg, rgba(165, 180, 215, .45), rgba(165, 190, 225, .7)); }
    header { display: flex; align-items: center; justify-content: space-between; height: 20px; padding: 0 0 0 3px; }
    h2 { margin: 0; font-weight: 400; font-size: 12px; white-space: nowrap; }
    :host([wide]) h2 { font-size: 11px; }
    :host([wide]) header { padding-left: 1px; }
    .close { width: 16px; height: 16px; box-sizing: border-box; border: 1px solid #2c3150; outline: 1px solid rgba(210, 215, 235, .6); outline-offset: -2px;
      background: rgba(120, 130, 165, .6); display: grid; place-items: center; }
    .body { display: flex; flex-direction: column; align-items: center; border: 1px solid #20233c; outline: 1px solid #dfe2f0; padding: 0 0 2px;
      background: linear-gradient(90deg, #f7f7fd, #d4d3e8 25%, #cfcee4 75%, #a3a1b6); }
    .grip { width: 16px; height: 2px; background: #fff; box-shadow: 1px 1px 0 #a5a4b4; margin: 6px 12px 5px 0; }
    :host([wide]) .body { flex-direction: row; padding: 3px 4px; background: linear-gradient(#f7f7fd, #d4d3e8 35%, #cfcee4 75%, #a3a1b6); }
    :host([wide]) .grip { width: 2px; height: 16px; margin: 0 6px 8px 2px; }
    .tool.drop::after { right: -3px; }
  `];
  render() {
    return html`
      <header><h2>${this.heading}</h2>
        <button class="close" aria-label="Close"><svg width="8" height="8" viewBox="0 0 8 8"><path d="M1 1l6 6M7 1L1 7" stroke="#fff" stroke-width="2"/></svg></button>
      </header>
      <div class="body"><i class="grip"></i>
        ${this.items.map((i) => html`<button class="tool ${i.drop ? "drop" : ""}" aria-label=${i.label}>${draw(i.icon)}</button>`)}
      </div>`;
  }
}

const PALETTES: { id: string; heading: string; wide?: boolean; items: Item[] }[] = [
  { id: "connection", heading: "C...", items: [it("faceBlue", "General connection", true), it("weld", "Weld connection", true), it("seamA", "Seam connection", true), it("seamB", "Surface connection", true)] },
  { id: "restraint", heading: "R...", items: [it("clampWall", "Clamp"), it("slider", "Surface slider", true), it("triad", "Advanced restraint", true)] },
  { id: "solver", heading: "S...", items: [it("dbArrow", "Storage location", true)] },
  { id: "mass", heading: "M...", items: [it("barrel", "Mass", true), it("barrelSum", "Mass sum", true)] },
  { id: "loads", heading: "Lo...", items: [it("pressure", "Pressure"), it("force", "Force", true), it("gravity", "Acceleration", true), it("dispForce", "Line force", true), it("bearing", "Bearing load")] },
  { id: "image", heading: "I...", items: [it("greyRings", "Deformation"), it("greyBlob", "Von Mises stress"), it("greyBlobHatch", "Precision", true)] },
  { id: "face", heading: "Face Face Connection Propert...", wide: true, items: [it("faceBlue", "Slider"), it("faceMesh", "Contact"), it("facePlain", "Fastened"), it("faceSpring", "Fastened spring"), it("boltUp", "Pressure fitting"), it("boltDown", "Bolt tightening")] },
];

const H = "handle", S = "rule";
const SIDE: (Item | string)[] = [
  H, it("gear", "Workbench"), H, it("dbTree", "Storage"), it("dbTree2", "Temporary data"), H, it("cursor", "Select", true),
  H, it("tri", "Triangle mesh", true), it("tetra", "Tetrahedron mesh", true), S,
  it("cube", "Solid property"), it("plate", "Shell property", true), it("beam", "Beam property", true), it("docFolder", "Imported property"), S,
  it("light", "Model check"), S, it("sphere", "Material"),
  H, it("tomDots", "Mesh visualization", true), it("tomBox", "Boundary", true), it("tomSize", "Local size", true), it("tomHash", "Mesh quality", true),
  H, it("layers", "Group"), it("layers1", "Point group", true), it("layers2", "Line group", true), it("layers3", "Surface group", true), it("layers4", "Proximity group", true),
  H, it("inspect", "Analysis search"), H, it("probe", "Information", true), it("fan", "Animate"), H, it("measure", "Measure"), it("clamp", "Measure item"),
];
const BOTTOM: (Item | string)[] = [
  H, it("newDoc", "New"), it("open", "Open"), it("save", "Save"), it("print", "Print"), it("cut", "Cut"), it("copy", "Copy"), it("paste", "Paste"),
  it("undo", "Undo", true), it("redo", "Redo", true), it("whatsThis", "What's this?"),
  H, it("fx", "Formula"), it("talk", "Comment"), it("key", "Check", false, true), it("table", "Design table", true), it("links", "Relations"), it("lock", "Lock", true), it("books", "Equivalent dimensions"),
  H, it("fly", "Fly mode"), it("fit", "Fit all in"), it("pan", "Pan"), it("rotate", "Rotate"), it("zoomIn", "Zoom in"), it("zoomOut", "Zoom out"), it("normal", "Normal view"), it("quad", "Multi-view"),
  it("cubeView", "View mode", true), it("cylAsk", "Render style", true), it("hide", "Hide or show"), it("swap", "Swap visible space"),
  H, it("treeCandle", "Update"), H, it("greyHatch", "Mesh"), it("greyCube", "Solid"), it("greyBridge", "Deform"), it("greyBlobWave", "Stress"), it("greyBlobAsk", "Displacement"), it("greyBlob", "Principal stress"), it("press", "Compute"),
];

const MENUS: [string, string, string][] = [
  ["start", "S", "tart"], ["enovia", "", "ENOVIA V5 VPM"], ["", "F", "ile"], ["", "E", "dit"], ["", "V", "iew"], ["", "I", "nsert"], ["", "T", "ools"], ["", "W", "indow"], ["", "H", "elp"],
];
const TREE: { label: string; level: number; icon: string; sign: string; state?: string }[] = [
  { label: "Analysis Manager", level: 0, icon: "tAnalysis", sign: "", state: "selected" },
  { label: "Links Manager.1", level: 1, icon: "tLinks", sign: "+" },
  { label: "Finite Element Model.1", level: 1, icon: "tModel", sign: "-" },
  { label: "Nodes and Elements", level: 2, icon: "tNodes", sign: "-" },
  { label: "Surface Mesh.1", level: 3, icon: "tMesh", sign: "+" },
  { label: "Properties.1", level: 2, icon: "tProps", sign: "+" },
  { label: "Materials.1", level: 2, icon: "tFolder", sign: "+" },
  { label: "Static Case", level: 2, icon: "tStatic", sign: "+", state: "current" },
];
const FIELDS = ["0 s of CPU", "0 kilo-bytes of memory", "0 kilo-bytes of disk"];

const loadMark = (x: number, y: number, foot: [number, number]) => svg`
  <g transform="translate(${x} ${y})" fill="none" stroke="#f01414" stroke-width="1.600">
    <path d="M19-15L0 0-53 22M0 0L${foot[0]} ${foot[1]}"/>
    <path d="M2-1q-4-8 0-14 8-7 14 1M2 0q5 4 12 2"/>
    <path d="M-31 2q-1 8 3 10 4-2 3-10q6 4 5 12-2 6-5 3-4-4-4-12"/>
    <g fill="#f01414"><circle cx="-53" cy="22" r="2.500"/><circle cx="19" cy="-15" r="1"/><path d="M12-1l5 1-4 3z"/><circle cx="${foot[0]}" cy="${foot[1]}" r="2"/></g>
  </g>`;

const scene = svg`
  <defs>
    <linearGradient id="skin" gradientUnits="userSpaceOnUse" x1="0" y1="600" x2="124" y2="957">
      <stop offset="0" stop-color="#4a343c"/><stop offset=".1" stop-color="#452f38"/><stop offset=".3" stop-color="#463346"/><stop offset=".38" stop-color="#4c4054"/>
      <stop offset=".43" stop-color="#685d62"/><stop offset=".49" stop-color="#786b62"/><stop offset=".62" stop-color="#7c7060"/><stop offset=".64" stop-color="#5a4c44"/>
      <stop offset=".66" stop-color="#201412"/><stop offset=".72" stop-color="#2c1c19"/><stop offset=".8" stop-color="#36241f"/><stop offset="1" stop-color="#33221d"/>
    </linearGradient>
    <linearGradient id="sheen" gradientUnits="userSpaceOnUse" x1="0" y1="740" x2="31" y2="883">
      <stop offset="0" stop-color="#5a4c42" stop-opacity="0"/><stop offset=".3" stop-color="#63574e" stop-opacity=".8"/><stop offset=".52" stop-color="#7a706a"/>
      <stop offset=".78" stop-color="#4a3a32"/><stop offset="1" stop-color="#35241e"/>
    </linearGradient>
    <linearGradient id="fade" gradientUnits="userSpaceOnUse" x1="850" y1="640" x2="1500" y2="400"><stop offset="0" stop-color="#fff"/><stop offset=".5" stop-color="#aaa"/><stop offset="1" stop-color="#000"/></linearGradient>
    <mask id="left"><rect x="600" y="0" width="1300" height="800" fill="url(#fade)"/></mask>
    <linearGradient id="inside" gradientUnits="userSpaceOnUse" x1="0" y1="600" x2="124" y2="957">
      <stop offset="0" stop-color="#6c5f62"/><stop offset=".24" stop-color="#7a6d6e"/><stop offset=".32" stop-color="#2e1f1e"/><stop offset=".5" stop-color="#3e2825"/><stop offset="1" stop-color="#3f2a26"/>
    </linearGradient>
  </defs>
  <path d="M1629 29A170 58 68.400 0 1 1755 345A170 58 68.400 0 1 1629 29z" fill="url(#skin)"/>
  <path d="M713 389L1628 28 1752 346 850 702z" fill="url(#skin)"/>
  <path d="M713 389L1628 28 1752 346 850 702z" fill="url(#sheen)" mask="url(#left)"/>
  <path d="M1764 336Q1758 342 1748 345L1640 387" stroke="#766b68" stroke-width="3" fill="none"/>
  <path d="M713 389L1618 31" stroke="#5d5360" stroke-width="1" fill="none"/>
  <path d="M1618 31L1629 29A170 58 68.400 0 1 1755 345L850 702" fill="none" stroke="#000" stroke-width="2"/>
  <path d="M706 390A171 67 67.500 0 1 836 706A171 67 67.500 0 1 706 390z" fill="url(#inside)" stroke="#000" stroke-width="2"/>
  <path d="M1705 79l34-13M1772 237l16-6" stroke="#6a6608" stroke-width="4"/><path d="M1705 78l34-13M1772 236l16-6" stroke="#c2bc10" stroke-width="2"/>
  ${loadMark(709, 493, [6, 19])}${loadMark(835, 607, [24, 57])}${loadMark(779, 650, [22, 48])}
  <path d="M1667 180l26-10 12 28-26 10zM1675 177l13 28M1684 173l13 28M1671 190l26-10M1668 197l35-16" fill="none" stroke="#fff" stroke-width="1.300"/>
  <g stroke="#dcd8f8" stroke-width="2" fill="#1c4a62">
    <path d="M1752 117l28-12 12 28q-26 13-40-16z"/><path d="M1790 82l12-8q11 10 14 28 1 14-6 16-8-2-12-15z"/>
    <path d="M1742 118l48-22-10 9M1742 118l61-24" fill="none"/></g>
  <circle cx="1742" cy="118" r="3.500" fill="#dcd0f8"/><rect x="1799" y="89" width="9" height="9" fill="#e01010"/>
  <g fill="#f0e020" font-family="DejaVu Sans, sans-serif" font-size="11"><text x="1746" y="123">z</text><text x="1795" y="104">y</text><text x="1798" y="139">x</text></g>`;

@customElement("app-root")
export class AppRoot extends LitElement {
  static styles = [toolCss, css`
    :host { display: flex; flex-direction: column; height: 100vh; overflow: hidden; background: #d0cfe4; color: #14141c;
      font: 12px/15px "Open Sans", "Noto Sans", sans-serif; }
    a { color: inherit; text-decoration: none; }
    u { text-underline-offset: 2px; }
    .menubar { flex: none; height: 12px; display: flex; align-items: flex-end; justify-content: space-between; overflow: hidden; border-bottom: 1px solid #fff; box-shadow: inset 0 -1px #e6e5f0; }
    .menus { display: flex; align-items: flex-end; }
    .menus .glyph { width: 18px; height: 18px; margin: 0 0 0 1px; }
    .menus a { padding: 0 11px; line-height: 17px; white-space: nowrap; }
    .menus a.start { padding: 0 17px 0 8px; background: #fbe4bf; }
    .menus a.enovia { padding: 0 4px 0 7px; }
    .mdi { display: flex; gap: 3px; }
    .mdi button { width: 16px; height: 12px; border: 1px solid #a3b6c8; background: #e0eff6; display: grid; place-items: center; }
    main { flex: 1; min-height: 0; display: flex; }
    .viewport { position: relative; flex: 1; min-width: 0; overflow: hidden; border-top: 1px solid #77777c; box-shadow: inset 2px 0 #8a8a90;
      background: linear-gradient(#363463, #403f6e 46%, #454474 63%, #504f7c 70%, #6f6e93 80%, #a9a8be); }
    .scene { position: absolute; inset: 0; width: 100%; height: 100%; }
    .tree { position: absolute; left: 2px; top: 189px; margin: 0; padding: 0; list-style: none; height: 226px; display: grid; grid-auto-rows: 1fr; color: #fff; font-size: 13px; }
    .tree svg.lines { position: absolute; left: 0; top: 0; }
    .tree li { display: flex; align-items: center; }
    .tree .l1 { padding-left: 1px; } .tree .l2 { padding-left: 22px; } .tree .l3 { padding-left: 42px; }
    .tree .glyph { margin: -7px 2px 0 2px; position: relative; }
    .tree .sign { width: 14px; height: 14px; margin: -8px 5px 0 0; border-radius: 50%; background: radial-gradient(#c8c8c8, #77777c); position: relative; display: grid; place-items: center; }
    .tree .label { padding: 0 1px; line-height: 20px; background: rgba(40, 38, 85, .35); white-space: nowrap; }
    .tree .selected { background: #0a64f8; box-shadow: -1px -1px #fff; }
    .tree .current { text-decoration: underline; text-underline-offset: 3px; }
    tool-palette { position: absolute; }
    .connection { left: 547px; top: 122px; } .restraint { right: 51px; top: 183px; } .solver { right: 253px; top: 281px; }
    .mass { right: 87px; top: 386px; } .loads { right: 24px; top: 542px; } .image { right: 125px; top: 589px; } .face { left: 799px; top: 685px; }
    .dialog { position: absolute; box-sizing: border-box; border: 1px solid #dfe4ee; outline: 1px solid rgba(15, 15, 30, .7); border-radius: 6px; padding: 0 5px 5px; backdrop-filter: blur(8px); box-shadow: 0 2px 10px 3px rgba(10, 10, 30, .5); }
    .dialog h1 { margin: 0; font-size: 12px; font-weight: 400; white-space: nowrap; }
    .dialog header { display: flex; justify-content: space-between; align-items: flex-start; }
    .caption { display: flex; border: 1px solid rgba(225, 230, 240, .75); border-top: 0; border-radius: 0 0 5px 5px; outline: 1px solid rgba(40, 45, 75, .6); }
    .caption button { width: 27px; height: 18px; display: grid; place-items: center; }
    .caption button + button { border-left: 1px solid rgba(60, 70, 110, .6); }
    .caption .x { width: 46px; }
    .pane { border: 1px solid #2a2a34; outline: 1px solid rgba(225, 230, 240, .75); }
    .error { left: 716px; top: 379px; width: 488px; height: 197px; display: flex; flex-direction: column;
      background: linear-gradient(120deg, rgba(205, 205, 215, .6) 7%, rgba(120, 125, 155, .5) 10%, rgba(100, 105, 135, .35) 60%, rgba(170, 175, 190, .5)); }
    .error header { height: 27px; } .error h1 { padding: 5px 0 0 1px; color: #0c0c14; font-size: 11px; }
    .error .pane { flex: 1; display: flex; flex-direction: column; background: #fff; }
    .error .message { flex: 1; display: flex; align-items: center; gap: 8px; padding: 16px 8px 0 25px; color: #101010; font-size: 11px; }
    .error .message svg { flex: none; margin-bottom: 42px; }
    .error p { margin: 0; white-space: pre; }
    .error footer { background: #f0f0f0; padding: 12px 6px 12px 0; display: flex; justify-content: flex-end; }
    .error footer button { width: 88px; height: 26px; background: #f1f1f1; border: 1px solid #fff; border-right-color: #6a6a6a; border-bottom-color: #6a6a6a; box-shadow: inset -1px -1px #a4a4a4; }
    .compute { right: 9px; bottom: 9px; width: 382px; height: 198px; display: flex; flex-direction: column; background: linear-gradient(rgba(120, 140, 190, .75), rgba(130, 150, 200, .8) 15%, rgba(170, 190, 225, .9)); }
    .compute header { height: 27px; } .compute h1 { padding: 5px 0 0 2px; }
    .compute .x { background: radial-gradient(circle at 14px 8px, rgba(250, 140, 90, .8), transparent 7px), radial-gradient(circle at 21px 10px, rgba(130, 240, 110, .8), transparent 9px), linear-gradient(90deg, rgba(235, 250, 255, .9), rgba(150, 200, 250, .3)); }
    .compute .pane { flex: 1; display: flex; flex-direction: column; padding: 9px 9px 8px 10px; position: relative; overflow: hidden; color: #14141c;
      background: radial-gradient(circle at 26px 150px, rgba(250, 160, 40, .6) 4px, rgba(252, 205, 120, .5) 18px, transparent 32px), #fde6c1; }
    .planet { position: absolute; left: -24px; bottom: -48px; width: 66px; height: 66px; border-radius: 50%; background: radial-gradient(circle at 50% 15%, #9fb4bc, #3f7a98 30%, #182a3a 60%); }
    .fields { height: 95px; border: 1px solid #8f8f94; box-shadow: inset 1px 1px #fff; padding: 1px 2px; display: flex; flex-direction: column; gap: 1px; }
    .fields input { font: inherit; color: inherit; box-sizing: border-box; height: 19px; width: 100%; padding: 0 1px; background: #efefef; border: 2px solid #77777a; border-right: 1px solid #fff; border-bottom: 1px solid #fff; }
    .ask { margin: 2px 0 0; line-height: 16px; }
    .answers { margin-top: auto; display: flex; justify-content: flex-end; gap: 7px; position: relative; }
    .answers button { width: 48px; height: 21px; background: #d0cfe4; border: 1px solid #f4f4fa; border-right: 2px solid #77778a; border-bottom: 2px solid #77778a; }
    .answers .default { outline: 1px solid #4c4c5a; outline-offset: -1px; }
    .side { flex: none; width: 35px; box-sizing: border-box; display: flex; flex-direction: column; align-items: flex-start; background: linear-gradient(90deg, #fff 4px, #ebeaf5 5px, #d0cfe4 16px, #c6c5dc); padding-left: 5px; }
    .side .tool { width: 30px; }
    .side .tool.drop::after { right: -2px; }
    .side .handle { flex: none; width: 16px; height: 2px; margin: 6px 0; background: #fff; box-shadow: 1px 1px 0 #9b9aaa; }
    .side .rule { flex: none; align-self: stretch; height: 1px; margin: 3px 0 4px; background: #9b9aaa; box-shadow: 0 1px #fff; }
    .bottom { flex: none; height: 38px; box-sizing: border-box; display: flex; align-items: flex-start; justify-content: space-between; border-bottom: 2px solid #55555f;
      background: linear-gradient(#fff, #ecebf5 6px, #d0cfe4 14px, #cdcce2 27px, #8f8e9f 36px); }
    .strip { display: flex; padding-top: 5px; }
    .strip .drop { width: 30px; padding-right: 2px; }
    .strip .tool.drop::after { right: 0; }
    .strip .tool.narrow { width: 24px; }
    .strip .handle { flex: none; width: 2px; height: 18px; margin: -1px 7px 0 9px; background: #fff; box-shadow: 1px 1px 0 #9b9aaa; }
    .strip .handle:first-child { margin-left: 6px; }
    .logo { flex: none; margin: 1px 3px 0 0; }
    .status { flex: none; height: 16px; display: flex; justify-content: flex-end; gap: 2px; }
    .status input { width: 297px; box-sizing: border-box; height: 14px; margin-top: 2px; border: 0; border-left: 2px solid #55555f; border-top: 2px solid #55555f; background: #fff; }
    .status button { width: 32px; border: 1px solid #f6f6fc; border-right-color: #77778a; display: grid; place-items: center; }
  `];

  private bar(entries: (Item | string)[]) {
    return entries.map((e) => typeof e === "string"
      ? html`<i class=${e}></i>`
      : html`<button class="tool ${e.drop ? "drop" : ""} ${e.narrow ? "narrow" : ""}" aria-label=${e.label}>${draw(e.icon)}</button>`);
  }

  render() {
    const cross = html`<svg width="12" height="10" viewBox="0 0 12 10"><path d="M2 1l8 8M10 1L2 9" stroke="#3c4258" stroke-width="4"/><path d="M2 1l8 8M10 1L2 9" stroke="#fff" stroke-width="2.200"/></svg>`;
    return html`
      <div class="menubar">
        <nav class="menus">${draw("app")}
          ${MENUS.map(([cls, key, rest]) => html`<a href="#" class=${cls}>${key ? html`<u>${key}</u>` : nothing}${rest}</a>`)}
        </nav>
        <div class="mdi">
          <button aria-label="Minimize"><svg width="8" height="8"><path d="M1 5h6" stroke="#7d93a8" stroke-width="2"/></svg></button>
          <button aria-label="Restore"><svg width="10" height="8"><path d="M1 3h5v4H1zM3 3V1h5v4H6" fill="none" stroke="#7d93a8"/></svg></button>
          <button aria-label="Close"><svg width="8" height="8"><path d="M1 0l6 7M7 0L1 7" stroke="#7d93a8" stroke-width="2"/></svg></button>
        </div>
      </div>
      <main>
        <section class="viewport">
          <svg class="scene" viewBox="0 14 1882 935" preserveAspectRatio="xMidYMid slice" aria-hidden="true">${scene}</svg>
          <ul class="tree">
            <svg class="lines" width="70" height="226" aria-hidden="true"><path d="M8 18v49M28 78v132M49 104v22M8 39h12M8 67h12M28 96h12M49 124h12M28 152h12M28 180h12M28 208h12" stroke="#fff" stroke-width="2"/></svg>
            ${TREE.map((n) => html`<li class="l${n.level}">
              ${n.sign ? html`<button class="sign" aria-label="${n.sign === "+" ? "Expand" : "Collapse"} ${n.label}"><svg width="10" height="10"><path d=${n.sign === "+" ? "M0 5h10M5 0v10" : "M0 5h10"} stroke="#000" stroke-width="3"/></svg></button>` : nothing}
              ${draw(n.icon)}<span class="label ${n.state ?? ""}">${n.label}</span></li>`)}
          </ul>
          ${PALETTES.map((p) => html`<tool-palette class=${p.id} .heading=${p.heading} ?wide=${!!p.wide} .items=${p.items}></tool-palette>`)}
          <div class="dialog error" role="alertdialog" aria-labelledby="error-title">
            <header><h1 id="error-title">Error</h1><div class="caption"><button class="x" aria-label="Close">${cross}</button></div></header>
            <div class="pane">
              <div class="message">
                <svg width="32" height="32" viewBox="0 0 32 32" aria-hidden="true">
                  <circle cx="16" cy="16" r="15.500" fill="#e8e4e4" stroke="#8a7a7a"/><circle cx="16" cy="16" r="13.500" fill="#c41420"/>
                  <path d="M3 15a13 13 0 0 1 26 0q-13 4-26 0z" fill="#dc5a60"/><path d="M10 10l12 12M22 10L10 22" stroke="#fff" stroke-width="4.500"/></svg>
                <p>No mesh element associated to supports of 3D Property.1
Use a smaller size to mesh these corresponding supports or check that
the support belongs to the meshing arena</p>
              </div>
              <footer><button>OK</button></footer>
            </div>
          </div>
          <div class="dialog compute" role="dialog" aria-labelledby="compute-title">
            <header><h1 id="compute-title">Computation Resources Estimation</h1>
              <div class="caption">
                <button aria-label="Minimize"><svg width="12" height="6"><path d="M1 1h10v4H1z" fill="#fff" stroke="#3c4258"/></svg></button>
                <button aria-label="Maximize"><svg width="12" height="10"><path d="M2 2h8v6H2z" fill="none" stroke="#b8c4e0" stroke-width="2"/></svg></button>
                <button class="x" aria-label="Close">${cross}</button>
              </div></header>
            <div class="pane">
              <div class="fields">${FIELDS.map((f, i) => html`<input readonly aria-label="Estimate ${i + 1}" .value=${f} />`)}</div>
              <p class="ask">Do you want to continue the computation?</p>
              <i class="planet"></i>
              <div class="answers"><button class="default">Yes</button><button>No</button></div>
            </div>
          </div>
        </section>
        <aside class="side">${this.bar(SIDE)}</aside>
      </main>
      <div class="bottom">
        <div class="strip">${this.bar(BOTTOM)}</div>
        <svg class="logo" width="42" height="32" viewBox="0 0 42 32" role="img" aria-label="CATIA">
          <path d="M10 2q8-2 9 0 0 3-7 5 5 0 4 3" fill="none" stroke="#d02030" stroke-width="1.800"/>
          <path d="M4 12q10-1 9 3-2 6-12 7l7-9" fill="none" stroke="#4a2a90" stroke-width="2.200"/>
          <path d="M25 9q-7 1-7 4 4 3 4 6-3 3-8 2" fill="none" stroke="#f0a020" stroke-width="2.500"/>
          <text x="8" y="31" font-family="Liberation Sans, sans-serif" font-style="italic" font-weight="bold" font-size="10" fill="#3a2a8a">CATIA</text></svg>
      </div>
      <div class="status"><input aria-label="Power input" />
        <button aria-label="Dialog"><svg width="14" height="10"><path d="M1 1h6v6H1zM12 0v9M9 8h1" fill="none" stroke="#a09fac" stroke-width="2"/></svg></button>
        <button aria-label="About"><svg width="16" height="12"><circle cx="7" cy="6" r="5" fill="none" stroke="#a09fac" stroke-width="1.500"/><path d="M7 4v5M14 0v11" stroke="#a09fac" stroke-width="2"/></svg></button>
      </div>`;
  }
}
